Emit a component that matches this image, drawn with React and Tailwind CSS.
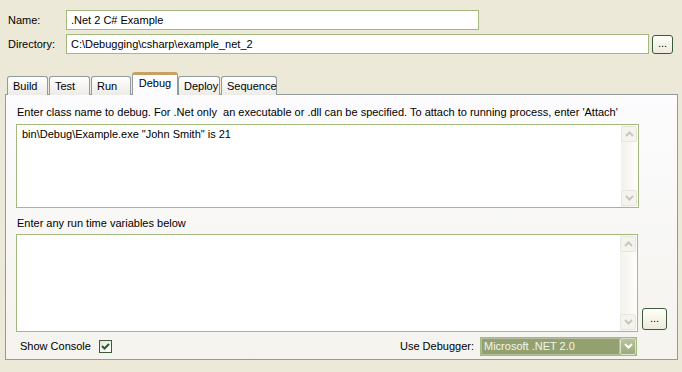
import React from 'react';

const tabs = ['Build', 'Test', 'Run', 'Debug', 'Deploy', 'Sequence'];
const tabWidths = {
  Build: 'w-[41px] mr-px',
  Test: 'w-[41px] mr-px',
  Run: 'w-[40px] mr-px',
  Debug: 'w-[46px]',
  Deploy: 'w-[42px] mr-px',
  Sequence: 'w-[56px]',
};

function Chevron({ up, className }) {
  return (
    <svg width="9" height="6" viewBox="0 0 9 6" className={className}>
      <path
        d={up ? 'M1 5 L4.5 1.5 L8 5' : 'M1 1 L4.5 4.5 L8 1'}
        fill="none"
        stroke="currentColor"
        strokeWidth="2"
      />
    </svg>
  );
}

function Scrollbar() {
  return (
    <div className="w-[17px] h-full flex flex-col bg-gradient-to-r from-[#F3F1EC] to-[#FEFEFB] py-px pr-px">
      <div className="h-[16px] w-[16px] border border-[#E8E6DC] rounded-[2px] bg-[#F4F3EE] flex items-center justify-center text-[#C9C7BA]">
        <Chevron up />
      </div>
      <div className="flex-1" />
      <div className="h-[16px] w-[16px] border border-[#E8E6DC] rounded-[2px] bg-[#F4F3EE] flex items-center justify-center text-[#C9C7BA]">
        <Chevron />
      </div>
    </div>
  );
}

function DotsButton({ className }) {
  return (
    <button
      className={`border border-[#3D5A3D] rounded-[3px] bg-gradient-to-b from-[#FFFFF8] to-[#EEEBDD] text-black text-[11px] leading-none flex items-center justify-center pb-[2px] ${className}`}
    >
      ...
    </button>
  );
}

export default function App() {
  return (
    <div className="w-[682px] h-[372px] bg-[#ECE9D8] text-black text-[11px] leading-none font-['Tahoma','Liberation_Sans',sans-serif] overflow-hidden">
      {/* Header fields */}
      <div className="pt-[10px] pl-[8px]">
        <div className="flex items-center h-[20px]">
          <span className="w-[58px]">Name:</span>
          <div className="w-[413px] h-[20px] border border-[#A4B97F] bg-white flex items-center px-[4px]">
            .Net 2 C# Example
          </div>
        </div>
        <div className="flex items-center h-[20px] mt-[4px]">
          <span className="w-[58px]">Directory:</span>
          <div className="w-[583px] h-[20px] border border-[#A4B97F] bg-white flex items-center px-[4px]">
            C:\Debugging\csharp\example_net_2
          </div>
          <DotsButton className="ml-[3px] w-[21px] h-[19px]" />
        </div>
      </div>

      {/* Tabs */}
      <div className="mt-[18px] pl-[7px] flex items-end h-[23px] relative z-10 -mb-px">
        {tabs.map((t) =>
          t === 'Debug' ? (
            <div
              key={t}
              className={`${tabWidths[t]} h-[23px] border-x border-[#919B9C] border-t-[3px] border-t-[#C8A064] rounded-t-[3px] bg-[#FCFCFE] flex items-start justify-center pt-[3px]`}
            >
              {t}
            </div>
          ) : (
            <div
              key={t}
              className={`${tabWidths[t]} h-[19px] border border-b-0 border-[#919B9C] rounded-t-[3px] bg-gradient-to-b from-[#FFFFFF] to-[#ECEBE6] flex items-center pl-[5px] pt-px`}
            >
              {t}
            </div>
          )
        )}
      </div>

      {/* Panel */}
      <div className="ml-[5px] w-[673px] h-[266px] border border-[#919B9C] bg-gradient-to-b from-[#FCFCFE] to-[#F4F3EE] pl-[10px] pt-[12px]">
        <div className="pl-px">
          Enter class name to debug. For .Net only&nbsp; an executable or .dll can be specified. To attach to running process, enter 'Attach'
        </div>
        <div className="mt-[6px] w-[623px] h-[84px] border border-[#A4B97F] bg-white flex">
          <div className="flex-1 pl-[5px] pt-[4px]">bin\Debug\Example.exe "John Smith" is 21</div>
          <Scrollbar />
        </div>

        <div className="mt-[10px] pl-px">Enter any run time variables below</div>
        <div className="flex items-end mt-[5px]">
          <div className="w-[622px] h-[98px] border border-[#A4B97F] bg-white flex">
            <div className="flex-1" />
            <Scrollbar />
          </div>
          <DotsButton className="ml-[4px] mb-[2px] w-[25px] h-[22px]" />
        </div>

        <div className="flex items-center mt-[7px] h-[14px]">
          <span className="pl-[4px] w-[83px]">Show Console</span>
          <div className="w-[13px] h-[13px] border border-[#3D5A3D] bg-gradient-to-br from-[#E6E4D8] to-[#FFFFFF] flex items-center justify-center">
            <svg width="9" height="9" viewBox="0 0 9 9">
              <path d="M1 4 L3.5 6.5 L8 2" fill="none" stroke="#21602A" strokeWidth="2" />
            </svg>
          </div>
          <span className="ml-[288px] w-[80px]">Use Debugger:</span>
          <div className="w-[157px] h-[19px] border border-[#A4B97F] bg-[#93A070] flex items-center">
            <div className="flex-1 text-[#F4F6EE] pl-[2px] pt-px bg-[#93A070] h-full flex items-center border border-[#FFFFFF]/30">
              Microsoft .NET 2.0
            </div>
            <div className="w-[16px] h-[17px] bg-gradient-to-b from-[#B8C49A] to-[#9CAB78] border border-[#FFFFFF]/60 rounded-[2px] flex items-center justify-center text-white">
              <Chevron />
            </div>
          </div>
        </div>
      </div>
    </div>
  );
}
